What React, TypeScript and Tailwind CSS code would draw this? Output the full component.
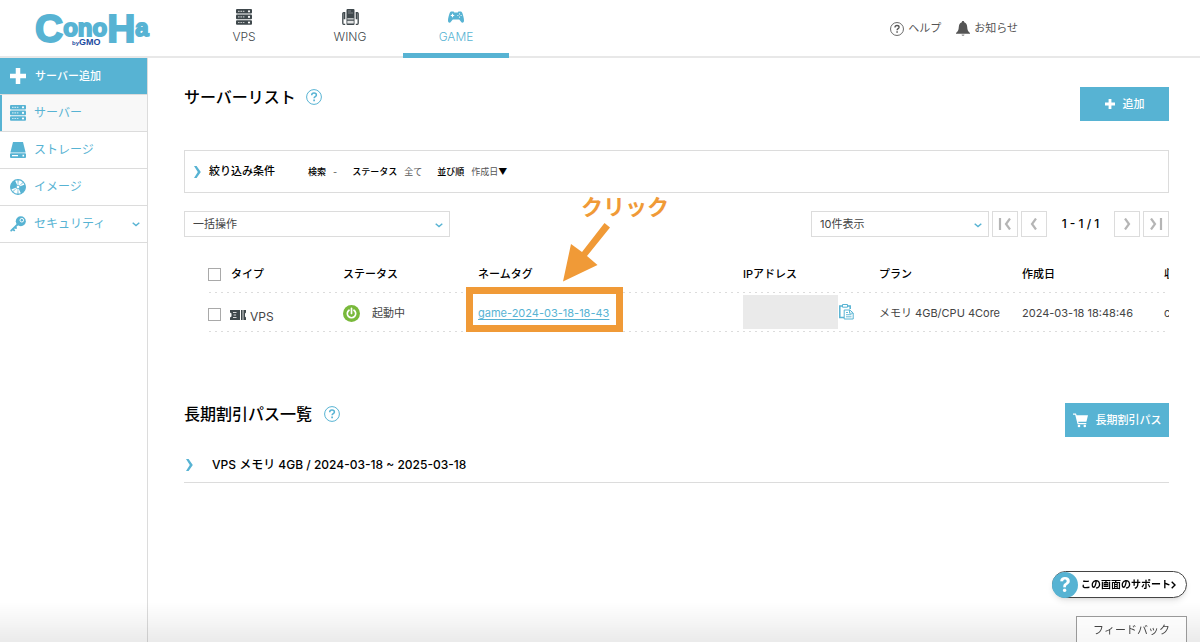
import type { ReactNode } from 'react';

const NAV_TABS = [
  { label: 'VPS', icon: 'vps', active: false },
  { label: 'WING', icon: 'wing', active: false },
  { label: 'GAME', icon: 'game', active: true },
];

const SIDE_ITEMS = [
  { label: 'サーバー', icon: 'server', active: true, sub: false },
  { label: 'ストレージ', icon: 'storage', active: false, sub: false },
  { label: 'イメージ', icon: 'disc', active: false, sub: false },
  { label: 'セキュリティ', icon: 'key', active: false, sub: true },
];

const FILTERS = [
  { name: '検索', value: '-' },
  { name: 'ステータス', value: '全て' },
  { name: '並び順', value: '作成日' },
];

const SERVERS = [
  { type: 'VPS', status: '起動中', name: 'game-2024-03-18-18-43', plan: 'メモリ 4GB/CPU 4Core', created: '2024-03-18 18:48:46', storage: 'c' },
];

function ServerIcon() {
  return (
    <svg width="16" height="16" viewBox="0 0 16 16" aria-hidden>
      {[0, 5.6, 11.2].map((y) => (
        <g key={y}>
          <rect x="0" y={y} width="16" height="4.6" rx="1" fill="currentColor" />
          <path d={`M2 ${y + 2.3}h7`} stroke="#fff" strokeWidth="1.2" strokeDasharray="1.6 .8" opacity=".65" />
          <circle cx="13" cy={y + 2.3} r="1.1" fill="#fff" />
        </g>
      ))}
    </svg>
  );
}

function WingIcon() {
  return (
    <svg width="17" height="16" viewBox="0 0 17 16" aria-hidden>
      <rect x="4.5" y="0" width="8" height="16" rx="1" fill="currentColor" />
      <path d="M6 2h3M6 4h5" stroke="#fff" strokeWidth=".7" opacity=".5" />
      <path d="M5.3 9.2h6.4v1.3H5.3zM5.3 11.7h6.4v2.8H5.3z" fill="#fff" opacity=".85" />
      <path d="M3.2 3.6H1.7Q.8 3.6.8 4.6v9.700q0 1 .9 1h1.500M13.800 3.600h1.500q.9 0 .9 1v9.700q0 1-.9 1h-1.500" fill="none" stroke="currentColor" strokeWidth="1.300" />
      <path d="M2.400 3.600v6.600M14.600 3.600v6.600" stroke="currentColor" strokeWidth="1.800" />
    </svg>
  );
}

function GameIcon() {
  return (
    <svg width="16" height="12" viewBox="0 0 16 12" aria-hidden>
      <path
        d="M3.6.6h2l.7.9h3.4l.7-.9h2c1 0 1.6.6 2 1.7.8 2.3 1.6 5 1.6 7.3 0 1.4-.6 2.1-1.4 2.1-1.3 0-2.2-2.2-3.4-3.3H4.8C3.6 9.5 2.7 11.7 1.4 11.7.6 11.7 0 11 0 9.6c0-2.3.8-5 1.6-7.3C2 1.2 2.6.6 3.6.6z"
        fill="currentColor"
      />
      <path d="M4.5 2.8v3.4M2.8 4.5h3.4" stroke="#fff" strokeWidth="1.2" />
      <g fill="#fff">
        <circle cx="11.5" cy="2.9" r=".6" />
        <circle cx="11.5" cy="6.1" r=".6" />
        <circle cx="9.9" cy="4.5" r=".6" />
        <circle cx="13.1" cy="4.5" r=".6" />
      </g>
    </svg>
  );
}

function StorageIcon() {
  return (
    <svg width="16" height="16" viewBox="0 0 16 16" fill="currentColor" aria-hidden>
      <path d="M3 0h10l2.6 10.5H.4z" />
      <path fillRule="evenodd" d="M1 11.3h14q1 0 1 1V15q0 1-1 1H1q-1 0-1-1v-2.7q0-1 1-1zM2 13v1.2h6V13zm10.5-.3v1.8h1.6v-1.8z" />
    </svg>
  );
}

function DiscIcon() {
  return (
    <svg width="16" height="16" viewBox="0 0 16 16" aria-hidden>
      <circle cx="8" cy="8" r="7.4" fill="#fff" stroke="currentColor" strokeWidth="1.1" />
      <path d="M8 8 1 10.5A7.5 7.5 0 0 1 5 1.2zM8 8l7-2.5a7.5 7.5 0 0 1-4 9.3z" fill="currentColor" />
      <path d="M8 8 7 .6a7.5 7.5 0 0 1 2.2 0zM8 8l1 7.400a7.500 7.500 0 0 1-2.200 0zM8 8l5-5.500 1 1.200zM8 8l-5 5.500-1-1.200z" fill="currentColor" opacity=".55" />
      <circle cx="8" cy="8" r="1.8" fill="#fff" stroke="currentColor" strokeWidth=".8" />
    </svg>
  );
}

function KeyIcon() {
  return (
    <svg width="16" height="16" viewBox="0 0 16 16" aria-hidden>
      <path d="M8 8 1.2 14.6M2.8 13l1.400 1.400M5 11l1 1" stroke="currentColor" strokeWidth="1.8" strokeLinecap="round" />
      <circle cx="10.8" cy="5.2" r="5" fill="currentColor" />
      <circle cx="11.8" cy="4.2" r="1.8" fill="none" stroke="#fff" strokeWidth="1" />
    </svg>
  );
}

function PlusIcon({ size }: { size: number }) {
  return (
    <svg width={size} height={size} viewBox="0 0 16 16" aria-hidden>
      <path d="M8 0v16M0 8h16" stroke="currentColor" strokeWidth="4.5" />
    </svg>
  );
}

function HelpIcon({ size = 16 }: { size?: number }) {
  return (
    <svg width={size} height={size} viewBox="0 0 16 16" fill="none" stroke="currentColor" aria-hidden>
      <circle cx="8" cy="8" r="7.4" strokeWidth="1" />
      <path d="M5.7 6.2C5.7 4.7 6.7 4 8 4s2.4.7 2.4 2c0 1.6-2.3 1.6-2.3 3.3" strokeWidth="1.5" />
      <path d="M8.1 10.5v1.7" strokeWidth="1.7" />
    </svg>
  );
}

function BellIcon() {
  return (
    <svg width="14" height="15" viewBox="0 0 14 15" fill="currentColor" aria-hidden>
      <path d="M7 0c.8 0 1.2.5 1.2 1.2C10.3 1.8 11 3.5 11.2 6c.2 3 .7 4.2 2.8 6v.7H0V12c2.1-1.8 2.6-3 2.8-6 .2-2.5.9-4.2 3-4.8C5.8.5 6.2 0 7 0z" />
      <path d="M5.5 13.4h3Q8.200 15 7 15t-1.500-1.600z" opacity=".6" />
    </svg>
  );
}

function CaretRight() {
  return (
    <svg width="7" height="12" viewBox="0 0 7 12" className="shrink-0 text-[#57b3d3]" aria-hidden>
      <path d="M0 0h2.6L6.8 6l-4.2 6H0l3.8-6z" fill="currentColor" />
    </svg>
  );
}

function SmallDown() {
  return (
    <svg width="8" height="5" viewBox="0 0 8 5" className="text-[#57b3d3]" aria-hidden>
      <path d="M.7.7 4 3.6 7.3.7" fill="none" stroke="currentColor" strokeWidth="1.4" />
    </svg>
  );
}

function TicketIcon() {
  return (
    <svg width="16" height="10" viewBox="0 0 16 10" className="text-[#3f484c]" aria-hidden>
      <path d="M0 0h10v10H0V7.5l1.5-1v-3L0 2.500zM11 0h1.600v10H11zM13.400 0H16v2.500l-1 1v3l1 1V10h-2.600z" fill="currentColor" />
      <path d="M3 2.500h3.500M3.600 5h2.500M3 7.500h3.500" stroke="#fff" strokeWidth=".8" />
    </svg>
  );
}

function PowerIcon() {
  return (
    <svg width="17" height="17" viewBox="0 0 17 17" fill="none" aria-hidden>
      <circle cx="8.5" cy="8.5" r="8.5" fill="#79b93b" />
      <path d="M6 5.2a4.2 4.2 0 1 0 5 0M8.5 3.3v5.2" stroke="#fff" strokeWidth="1.7" strokeLinecap="round" />
    </svg>
  );
}

function ClipboardIcon() {
  return (
    <svg width="15" height="16" viewBox="0 0 15 16" fill="none" stroke="currentColor" aria-hidden>
      <path d="M5 13.4H.8V2h10.400v3" strokeWidth="1.500" />
      <path d="M3.500.5h5v2.700h-5z" fill="#fff" strokeWidth="1" />
      <path d="M5.200 6h5.600l3.400 3v6H5.200z" fill="#fff" strokeWidth="1" />
      <path d="M10.500 6v3.200h3.500M7 8.500h2M7 10.700h5.500M7 12.800h5.500" strokeWidth=".9" />
    </svg>
  );
}

function CartIcon() {
  return (
    <svg width="15" height="15" viewBox="0 0 15 15" fill="currentColor" aria-hidden>
      <path d="M0 .5h3l.6 1.8H15l-1.600 6.500H5.200l.3 1.200h7.800v1.200H4.600L2.200 1.800H0z" />
      <circle cx="6" cy="13" r="1.3" />
      <circle cx="11.8" cy="13" r="1.3" />
    </svg>
  );
}

const ICONS: Record<string, ReactNode> = {
  vps: <ServerIcon />,
  wing: <WingIcon />,
  game: <GameIcon />,
  server: <ServerIcon />,
  storage: <StorageIcon />,
  disc: <DiscIcon />,
  key: <KeyIcon />,
};

function Logo() {
  return (
    <svg width="114" height="36" viewBox="0 0 114 36" className="overflow-visible" role="img" aria-label="ConoHa by GMO">
      <text x="-1" y="31" fill="#57b3d3" stroke="#57b3d3" strokeWidth="1.8" fontFamily="'Liberation Sans', sans-serif" fontWeight="700" fontSize="39">
        C<tspan fontSize="24" dy="-6">ono</tspan><tspan dy="6">H</tspan><tspan fontSize="24" dy="-6">a</tspan>
      </text>
      <text x="36" y="34" fill="#1b4aa0" fontFamily="'Liberation Sans', sans-serif" fontWeight="700" fontSize="9">
        <tspan fontSize="6">by</tspan>GMO
      </text>
    </svg>
  );
}

function Select({ label, option, width }: { label: string; option: string; width: string }) {
  return (
    <div className={`relative ${width}`}>
      <select aria-label={label} className="block h-[26px] w-full appearance-none border border-[#dcdcdc] bg-white pl-2 pr-6 text-[11px] text-[#444]">
        <option>{option}</option>
      </select>
      <span className="pointer-events-none absolute right-[7px] top-[12px]">
        <SmallDown />
      </span>
    </div>
  );
}

function PagerButton({ label, d }: { label: string; d: string }) {
  return (
    <button type="button" aria-label={label} className="flex size-[26px] items-center justify-center border border-[#dcdcdc] bg-white text-[#b5b5b5]">
      <svg width="14" height="12" viewBox="0 0 14 12" aria-hidden>
        <path d={d} fill="none" stroke="currentColor" strokeWidth="2.2" />
      </svg>
    </button>
  );
}

function Checkbox({ label }: { label: string }) {
  return <input type="checkbox" aria-label={label} className="block size-[13px] shrink-0 appearance-none border border-[#a9a9a9] bg-white" />;
}

function Header() {
  return (
    <header className="flex h-[58px] border-b-2 border-[#e8e8e8]">
      <a href="#" className="w-[191px] shrink-0 pl-9 pt-[11px]">
        <Logo />
      </a>
      <nav className="flex">
        {NAV_TABS.map((tab) => (
          <a
            key={tab.label}
            href="#"
            className={`flex h-[58px] w-[106px] flex-col items-center border-b-[5px] pt-[9px] text-[12px] font-light leading-4 ${
              tab.active ? 'border-[#57b3d3] text-[#57b3d3]' : 'border-transparent text-[#3f484c]'
            }`}
          >
            <span className="mb-1 flex h-4 items-center">{ICONS[tab.icon]}</span>
            {tab.label}
          </a>
        ))}
      </nav>
      <div className="ml-auto mr-[182px] flex items-center gap-[15px] pt-px text-[11px] text-[#555]">
        <a href="#" className="flex items-center gap-1">
          <HelpIcon size={14} />
          ヘルプ
        </a>
        <a href="#" className="flex items-center gap-1">
          <BellIcon />
          お知らせ
        </a>
      </div>
    </header>
  );
}

function Sidebar() {
  return (
    <aside className="w-[148px] shrink-0 border-r border-[#dcdcdc] text-[12px]">
      <a href="#" className="flex h-[37px] items-center gap-[9px] border-b border-[#dcdcdc] bg-[#57b3d3] pl-[10px] text-[11px] font-medium text-white">
        <PlusIcon size={16} />
        サーバー追加
      </a>
      <ul>
        {SIDE_ITEMS.map((item) => (
          <li key={item.label} className="border-b border-[#dcdcdc]">
            <a
              href="#"
              className={`flex h-9 items-center gap-2 border-l-2 pl-2 pr-[7px] text-[#57b3d3] ${
                item.active ? 'border-[#57b3d3] bg-[#f8f8f8]' : 'border-transparent'
              }`}
            >
              {ICONS[item.icon]}
              {item.label}
              {item.sub && <span className="ml-auto"><SmallDown /></span>}
            </a>
          </li>
        ))}
      </ul>
    </aside>
  );
}

function ServerTable() {
  const dotted = 'h-[39px] bg-[radial-gradient(#dcdcdc_1px,transparent_1px)] bg-[length:6px_3px] bg-bottom bg-repeat-x';
  return (
    <div className="overflow-hidden pl-6">
      <table className="w-[1060px] table-fixed border-collapse text-left text-[11px] text-[#444]">
        <colgroup>
          <col className="w-[135px]" />
          <col className="w-[135px]" />
          <col className="w-[265px]" />
          <col className="w-[136px]" />
          <col className="w-[143px]" />
          <col className="w-[142px]" />
          <col />
        </colgroup>
        <thead className="text-black">
          <tr className={dotted}>
            <th className="p-0 font-medium">
              <div className="flex items-center gap-[10px]">
                <Checkbox label="すべて選択" />
                タイプ
              </div>
            </th>
            <th className="p-0 font-medium">ステータス</th>
            <th className="p-0 font-medium">ネームタグ</th>
            <th className="p-0 font-medium">IPアドレス</th>
            <th className="p-0 font-medium">プラン</th>
            <th className="p-0 font-medium">作成日</th>
            <th className="p-0 font-medium">収納</th>
          </tr>
        </thead>
        <tbody>
          {SERVERS.map((s) => (
            <tr key={s.name} className={dotted}>
              <td className="p-0">
                <div className="flex items-center pt-[2px]">
                  <Checkbox label={s.name} />
                  <span className="ml-[9px] mr-1"><TicketIcon /></span>
                  <span className="pt-1 text-[12px] leading-4">{s.type}</span>
                </div>
              </td>
              <td className="p-0">
                <div className="flex items-center gap-3">
                  <PowerIcon />
                  {s.status}
                </div>
              </td>
              <td className="p-0">
                <a href="#" className="text-[#57b3d3] underline underline-offset-2">{s.name}</a>
              </td>
              <td className="p-0">
                <div className="flex items-center pb-1">
                  <span className="h-[34px] w-[95px] bg-[#eaeaea]" />
                  <button type="button" aria-label="コピー" className="ml-px text-[#57b3d3]">
                    <ClipboardIcon />
                  </button>
                </div>
              </td>
              <td className="p-0">{s.plan}</td>
              <td className="p-0">{s.created}</td>
              <td className="p-0">{s.storage}</td>
            </tr>
          ))}
        </tbody>
      </table>
    </div>
  );
}

/* Guide marks drawn over the name tag cell */
function ClickGuide() {
  return (
    <div className="pointer-events-none absolute left-[282px] top-[-64px]">
      <p className="whitespace-nowrap pl-[115px] text-[22px] font-bold leading-8 text-[#f09a37]">クリック</p>
      <svg width="48" height="60" viewBox="0 0 48 60" className="mb-1 ml-[97px] block" aria-hidden>
        <path d="M41.5 0 47 4.500 24 33l10.500 9L0 58.500 8 21l11 8z" fill="#f09a37" />
      </svg>
      <div className="h-[45px] w-[157px] border-[7px] border-[#f09a37]" />
    </div>
  );
}

export default function App() {
  return (
    <div className="flex min-h-screen flex-col bg-white font-['Inter','Noto_Sans_CJK_JP',sans-serif] text-black">
      <Header />
      <div className="flex flex-1">
        <Sidebar />
        <main className="min-w-0 flex-1 pb-20 pl-9 pr-[31px] pt-[29px]">
          <div className="flex h-[34px] items-center justify-between">
            <h1 className="flex items-center gap-[10px] pb-[15px] text-[16px] font-medium">
              サーバーリスト
              <a href="#" aria-label="ヘルプ" className="text-[#57b3d3]"><HelpIcon /></a>
            </h1>
            <button type="button" className="flex h-[34px] w-[89px] items-center justify-center gap-2 bg-[#57b3d3] text-[11px] font-medium text-white">
              <PlusIcon size={10} />
              追加
            </button>
          </div>

          <div className="mt-[29px] flex h-[43px] items-center border border-[#dcdcdc] pl-[9px]">
            <CaretRight />
            <button type="button" className="ml-2 mr-[33px] text-[11px] font-medium">絞り込み条件</button>
            <dl className="flex gap-[15px] text-[9px]">
              {FILTERS.map((f) => (
                <div key={f.name} className="flex gap-[7px]">
                  <dt className="font-medium">{f.name}</dt>
                  <dd className="text-[#555]">
                    {f.value}
                    {f.name === '並び順' && <span className="text-black">▼</span>}
                  </dd>
                </div>
              ))}
            </dl>
          </div>

          <div className="mt-[18px] flex items-center justify-between">
            <Select label="一括操作" option="一括操作" width="w-[266px]" />
            <div className="flex items-center gap-[3px]">
              <Select label="表示件数" option="10件表示" width="w-[178px]" />
              <PagerButton label="最初へ" d="M2 0v12M12 .5 8 6l4 5.5" />
              <PagerButton label="前へ" d="M9 .5 5 6l4 5.5" />
              <span className="w-[61px] text-center text-[12px] font-medium">1 - 1 / 1</span>
              <PagerButton label="次へ" d="M5 .5 9 6l-4 5.5" />
              <PagerButton label="最後へ" d="M2 .5 6 6l-4 5.5M12 0v12" />
            </div>
          </div>

          <div className="relative mt-[18px]">
            <ServerTable />
            <ClickGuide />
          </div>

          <div className="mt-[70px] flex h-[34px] items-center justify-between">
            <h2 className="flex items-center gap-3 pb-[13px] text-[16px] font-medium">
              長期割引パス一覧
              <a href="#" aria-label="ヘルプ" className="text-[#57b3d3]"><HelpIcon /></a>
            </h2>
            <button type="button" className="flex h-[34px] w-[104px] items-center justify-center gap-2 bg-[#57b3d3] text-[11px] font-medium text-white">
              <CartIcon />
              長期割引パス
            </button>
          </div>
          <button type="button" className="mt-[10px] flex h-9 w-full items-center gap-[19px] border-b border-[#dcdcdc] pl-[2px] text-[12px] font-medium">
            <CaretRight />
            VPS メモリ 4GB / 2024-03-18 ~ 2025-03-18
          </button>
        </main>
      </div>

      <div className="pointer-events-none fixed inset-x-0 bottom-0 h-10 bg-linear-to-b from-transparent to-black/8" aria-hidden />

      <div className="fixed bottom-0 right-[13px] flex flex-col items-end">
        <button type="button" className="mb-[18px] flex h-[27px] w-[135px] items-center rounded-full border border-[#444] bg-white text-[10px] font-bold shadow-md">
          <span className="-ml-px flex size-[26px] shrink-0 items-center justify-center rounded-full bg-[#57b3d3] text-[20px] leading-none text-white">?</span>
          <span className="ml-[3px] whitespace-nowrap">この画面のサポート</span>
          <svg width="5" height="8" viewBox="0 0 5 8" aria-hidden>
            <path d="M.7.7 4 4 .7 7.3" fill="none" stroke="currentColor" strokeWidth="1.4" />
          </svg>
        </button>
        <button type="button" className="h-[26px] w-[111px] border border-b-0 border-[#999] bg-white/60 pt-[2px] text-[11px] text-[#444]">フィードバック</button>
      </div>
    </div>
  );
}
